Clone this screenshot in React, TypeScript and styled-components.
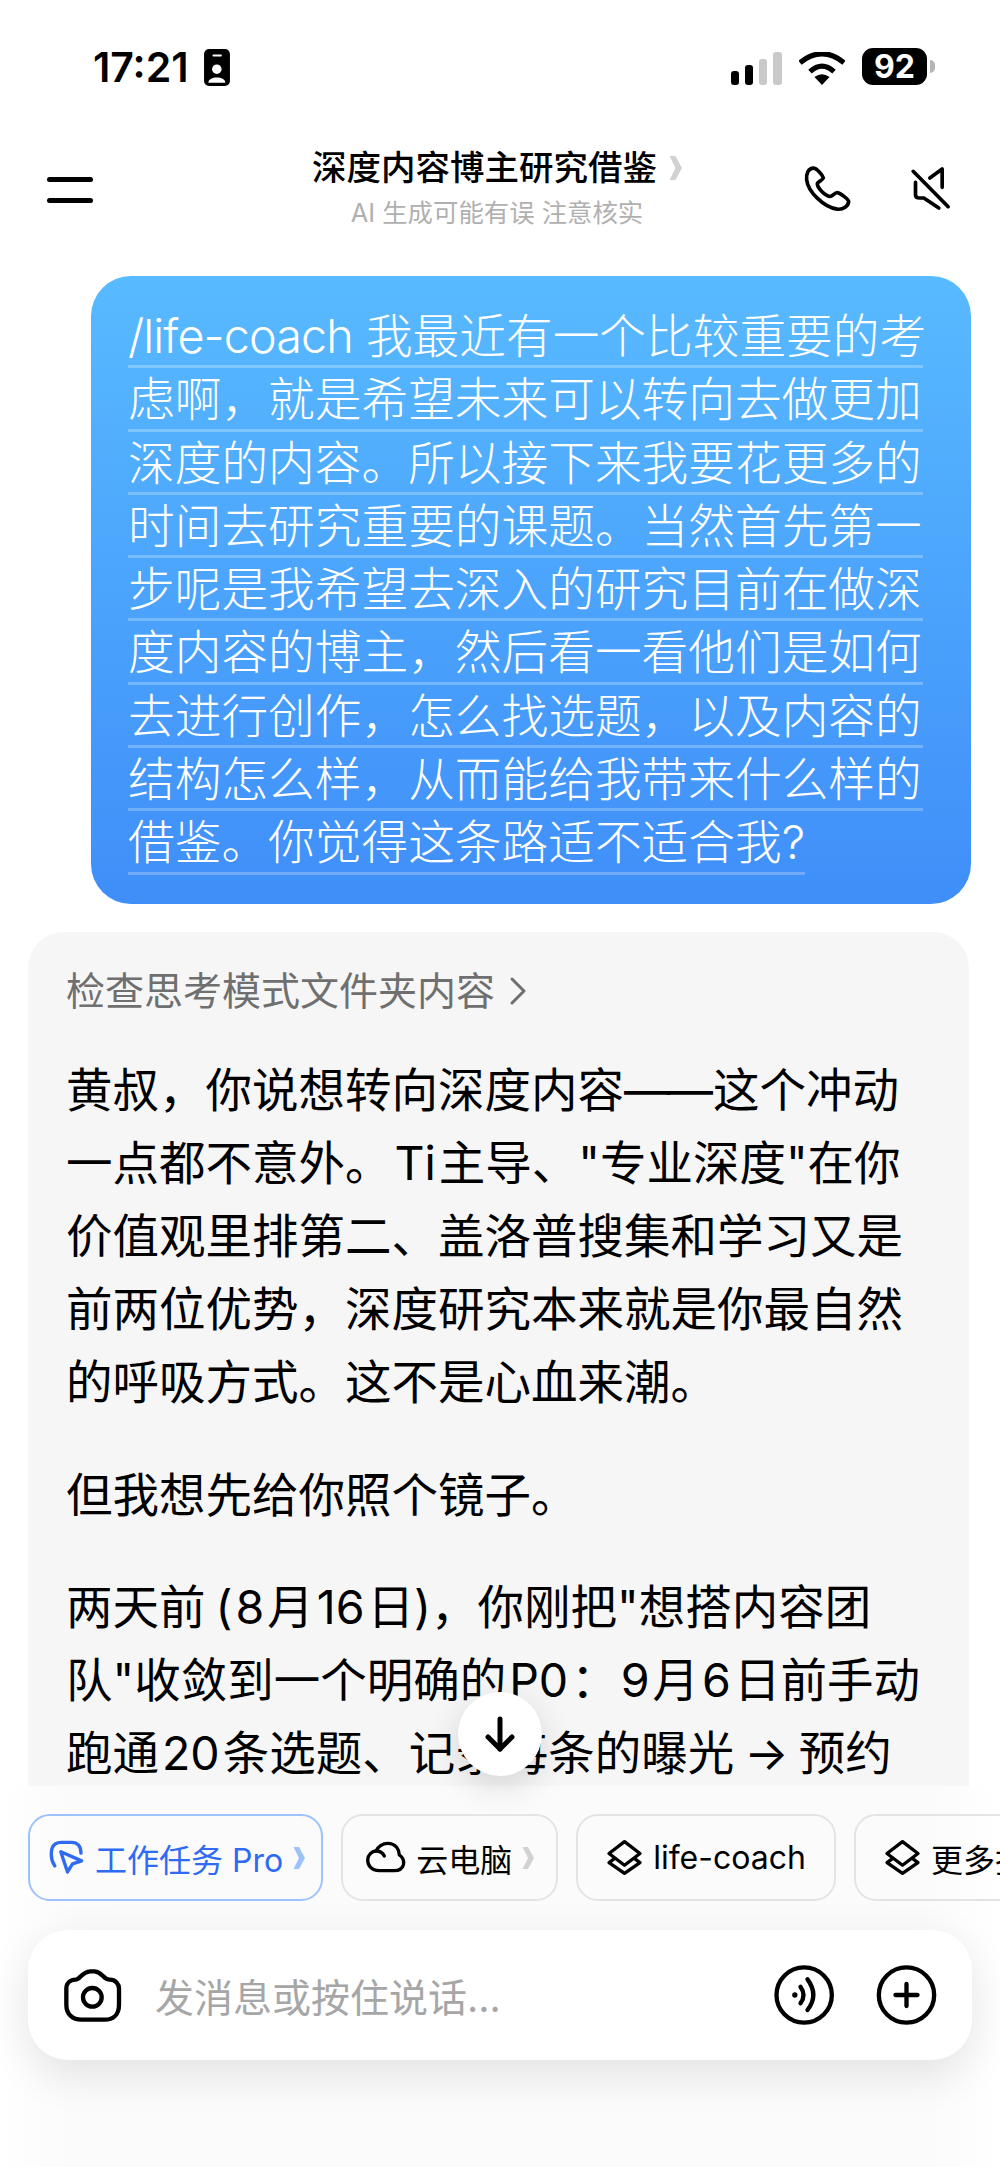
import styled, { createGlobalStyle } from 'styled-components';

const FONT = `Inter, "Noto Sans CJK SC", sans-serif`;

const GlobalStyle = createGlobalStyle`
  html, body {
    margin: 0;
    padding: 0;
    background: #fff;
  }
  * {
    box-sizing: border-box;
  }
`;

const Page = styled.div`
  width: 1000px;
  height: 2167px;
  display: flex;
  flex-direction: column;
  overflow: hidden;
  background: #fff;
  font-family: ${FONT};
  color: #000;
`;

const StatusBar = styled.div`
  flex: none;
  height: 120px;
  padding: 49px 73px 0 93px;
  display: flex;
  justify-content: space-between;
  align-items: flex-start;
`;
const StatusLeft = styled.div`
  display: flex;
  align-items: center;
  gap: 15px;
  height: 37px;
`;
const Time = styled.span`
  font-size: 41px;
  line-height: 37px;
  font-weight: 600;
`;
const StatusRight = styled.div`
  display: flex;
  align-items: flex-end;
  gap: 17px;
  height: 36px;
`;
const Battery = styled.div`
  width: 65px;
  height: 37px;
  border-radius: 11px;
  background: #000;
  color: #fff;
  font-size: 32px;
  font-weight: 700;
  display: flex;
  align-items: center;
  justify-content: center;
  position: relative;
  &::after {
    content: '';
    position: absolute;
    right: -8px;
    top: 12px;
    width: 5px;
    height: 13px;
    border-radius: 0 5px 5px 0;
    background: #b5b5b5;
  }
`;

const NavBar = styled.div`
  flex: none;
  height: 142px;
  padding: 0 47px;
  display: grid;
  grid-template-columns: 1fr auto 1fr;
  align-items: center;
`;
const MenuButton = styled.div`
  display: flex;
  flex-direction: column;
  gap: 16px;
  margin-top: -3px;
`;
const MenuBar = styled.div`
  width: 46px;
  height: 5px;
  border-radius: 3px;
  background: #000;
`;
const NavCenter = styled.div`
  display: flex;
  flex-direction: column;
  align-items: center;
  margin-left: -6px;
`;
const NavTitle = styled.div`
  display: flex;
  align-items: center;
  gap: 12px;
  font-size: 34.5px;
  line-height: 44px;
  font-weight: 500;
`;
const NavSub = styled.div`
  font-size: 25.4px;
  line-height: 46px;
  color: #b0b0b0;
`;
const NavActions = styled.div`
  display: flex;
  justify-content: flex-end;
  align-items: center;
  gap: 52px;
  margin-top: -4px;
  margin-right: -1px;
`;

const Chat = styled.div`
  flex: 1;
  min-height: 0;
  overflow: hidden;
  padding-top: 14px;
`;
const Bubble = styled.div`
  margin: 0 29px 28px 91px;
  padding: 29px 48px 29px 37px;
  border-radius: 40px;
  background: linear-gradient(180deg, #58baff 0%, #3f8ef9 100%);
  color: #fff;
`;
const BubbleLine = styled.div<{ $fit?: boolean }>`
  height: 63.3px;
  line-height: 62px;
  font-size: 46.7px;
  font-weight: 300;
  white-space: nowrap;
  border-bottom: 3px solid rgba(255, 255, 255, 0.25);
  width: ${(props) => (props.$fit ? 'fit-content' : 'auto')};
`;
const Command = styled.span`
  letter-spacing: -0.9px;
`;

const Card = styled.div`
  margin: 0 31px 0 28px;
  padding: 30px 38px 0;
  border-radius: 36px 36px 0 0;
  background: #f6f6f6;
  height: 1000px;
`;
const CardHead = styled.div`
  display: flex;
  align-items: center;
  gap: 14px;
  font-size: 39px;
  line-height: 58px;
  color: #6f6f6f;
  margin-bottom: 34px;
`;
const Para = styled.div`
  margin-bottom: 39px;
`;
const ParaLine = styled.div`
  font-size: 46.5px;
  line-height: 73.2px;
  word-spacing: -3px;
  white-space: nowrap;
`;
const Latin = styled.span`
  margin: 0 3px;
`;
const Dash = styled.span`
  letter-spacing: -4px;
  margin-right: 4px;
`;

const Composer = styled.div`
  flex: none;
  height: 381px;
  padding-top: 28px;
  position: relative;
  z-index: 1;
  background: linear-gradient(90deg, #fff 0%, #fbfbfb 7%, #fbfbfb 93%, #fff 100%);
`;
const ScrollDown = styled.div`
  position: absolute;
  left: 458px;
  bottom: calc(100% + 10px);
  width: 84px;
  height: 84px;
  border-radius: 50%;
  background: #fff;
  display: flex;
  align-items: center;
  justify-content: center;
  box-shadow: 0 10px 34px rgba(0, 0, 0, 0.14);
`;
const ChipRow = styled.div`
  display: flex;
  gap: 18px;
  padding-left: 28px;
  overflow: hidden;
  margin-bottom: 29px;
`;
const Chip = styled.div<{ $active?: boolean; $pad?: string }>`
  flex: none;
  height: 87px;
  padding: ${(props) => props.$pad ?? '0 28px'};
  display: flex;
  align-items: center;
  gap: 10px;
  border-radius: 22px;
  border: 2.5px solid ${(props) => (props.$active ? '#9dc2fb' : '#e4e4e4')};
  color: ${(props) => (props.$active ? '#2f6bf2' : '#000')};
  font-size: 32px;
  white-space: nowrap;
`;
const InputBar = styled.div`
  margin: 0 28px;
  height: 130px;
  padding: 0 34px 0 35px;
  border-radius: 40px;
  background: #fff;
  display: flex;
  align-items: center;
  box-shadow: 0 14px 44px rgba(0, 0, 0, 0.1);
`;
const Placeholder = styled.div`
  flex: 1;
  margin-left: 32px;
  font-size: 39px;
  color: #a6a6a6;
`;
const InputActions = styled.div`
  display: flex;
  align-items: center;
  gap: 41px;
`;

const Chevron = ({ color, h = 24 }: { color: string; h?: number }) => (
  <svg width={h * 0.5} height={h} viewBox="0 0 12 24">
    <path d="M0.5 1 L6 1 L12 12 L6 23 L0.5 23 L6 12 Z" fill={color} />
  </svg>
);

const Layers = () => (
  <svg width="37" height="37" viewBox="315 180 110 110" fill="none" stroke="currentColor" strokeWidth="10" strokeLinejoin="round" strokeLinecap="round">
    <path d="M370 188 L416 223 L370 258 L324 223 Z" />
    <path d="M338 240 L324 250 L370 282 L416 250 L402 240" />
  </svg>
);

// latin runs sit a little apart from the hanzi around them
const renderLine = (line: string) =>
  line.split(/([A-Za-z0-9]+|——)/).map((part, i) => {
    if (part === '——') return <Dash key={i}>{part}</Dash>;
    return i % 2 === 1 ? <Latin key={i}>{part}</Latin> : part;
  });

const bubbleLines = [
  <>
    <Command>/life-coach</Command> 我最近有一个比较重要的考
  </>,
  '虑啊，就是希望未来可以转向去做更加',
  '深度的内容。所以接下来我要花更多的',
  '时间去研究重要的课题。当然首先第一',
  '步呢是我希望去深入的研究目前在做深',
  '度内容的博主，然后看一看他们是如何',
  '去进行创作，怎么找选题，以及内容的',
  '结构怎么样，从而能给我带来什么样的',
  '借鉴。你觉得这条路适不适合我?',
];

const paragraphs = [
  [
    '黄叔，你说想转向深度内容——这个冲动',
    '一点都不意外。Ti主导、"专业深度"在你',
    '价值观里排第二、盖洛普搜集和学习又是',
    '前两位优势，深度研究本来就是你最自然',
    '的呼吸方式。这不是心血来潮。',
  ],
  ['但我想先给你照个镜子。'],
  [
    '两天前 (8月16日)，你刚把"想搭内容团',
    '队"收敛到一个明确的P0：9月6日前手动',
    '跑通20条选题、记录每条的曝光 → 预约',
  ],
];

export default function App() {
  return (
    <Page>
      <GlobalStyle />
      <StatusBar>
        <StatusLeft>
          <Time>17:21</Time>
          <svg width="26" height="37" viewBox="365 28 77 110">
            <rect x="365" y="28" width="77" height="110" rx="15" fill="#000" />
            <rect x="390" y="44" width="28" height="6" rx="3" fill="#fff" />
            <circle cx="403" cy="88" r="14" fill="#fff" />
            <path d="M378 128 C378 108 428 108 428 128 Z" fill="#fff" />
          </svg>
        </StatusLeft>
        <StatusRight>
          <svg width="51" height="33" viewBox="0 0 51 33">
            <rect x="0" y="19" width="8" height="14" rx="3" fill="#000" />
            <rect x="14" y="13" width="8" height="20" rx="3" fill="#000" />
            <rect x="28" y="7" width="8" height="26" rx="3" fill="#c9c9c9" />
            <rect x="42" y="0" width="9" height="33" rx="3" fill="#c9c9c9" />
          </svg>
          <svg width="46" height="33" viewBox="238 35 134 96" fill="none" stroke="#000" strokeWidth="15">
            <path d="M241 66 Q305 14 369 66" />
            <path d="M270 92 Q305 60 340 92" />
            <path d="M283 108 Q305 92 327 108 L305 131 Z" fill="#000" stroke="none" />
          </svg>
          <Battery>92</Battery>
        </StatusRight>
      </StatusBar>

      <NavBar>
        <MenuButton>
          <MenuBar />
          <MenuBar />
        </MenuButton>
        <NavCenter>
          <NavTitle>
            深度内容博主研究借鉴
            <Chevron color="#d2d2d2" h={26} />
          </NavTitle>
          <NavSub>AI 生成可能有误 注意核实</NavSub>
        </NavCenter>
        <NavActions>
          <svg width="55" height="52" viewBox="60 40 165 155" fill="none" stroke="#000" strokeWidth="11" strokeLinejoin="round">
            <path d="M100 55 C85 55 78 72 80 90 C84 125 130 172 172 178 C190 180 205 168 206 155 C206 148 180 130 172 128 C163 128 158 140 150 140 C135 138 112 115 112 102 C112 96 128 92 130 84 C128 76 110 55 100 55 Z" />
          </svg>
          <svg width="47" height="50" viewBox="380 40 140 150" fill="none" stroke="#000" strokeWidth="11" strokeLinecap="round" strokeLinejoin="round">
            <path d="M398 62 L503 168" />
            <path d="M448 82 L485 55 L485 110" />
            <path d="M405 95 L405 132 Q405 142 418 142 L430 142 L475 172" />
          </svg>
        </NavActions>
      </NavBar>

      <Chat>
        <Bubble>
          {bubbleLines.map((line, i) => (
            <BubbleLine key={i} $fit={i === bubbleLines.length - 1}>
              {line}
            </BubbleLine>
          ))}
        </Bubble>
        <Card>
          <CardHead>
            检查思考模式文件夹内容
            <svg width="18" height="30" viewBox="0 0 18 30" fill="none" stroke="#6f6f6f" strokeWidth="3" strokeLinecap="round" strokeLinejoin="round">
              <path d="M3 3 L15 15 L3 27" />
            </svg>
          </CardHead>
          {paragraphs.map((lines) => (
            <Para key={lines[0]}>
              {lines.map((line) => (
                <ParaLine key={line}>{renderLine(line)}</ParaLine>
              ))}
            </Para>
          ))}
        </Card>
      </Chat>

      <Composer>
        <ScrollDown>
          <svg width="30" height="36" viewBox="0 0 30 36" fill="none" stroke="#000" strokeWidth="5" strokeLinecap="round" strokeLinejoin="round">
            <path d="M15 3 L15 33" />
            <path d="M3 21 L15 33 L27 21" />
          </svg>
        </ScrollDown>
        <ChipRow>
          <Chip $active $pad="0 16px 0 18px">
            <svg width="37" height="37" viewBox="140 180 110 110" fill="none" stroke="currentColor" strokeWidth="10" strokeLinecap="round" strokeLinejoin="round">
              <path d="M160 260 C150 245 148 225 152 208 C156 195 165 190 180 190 L210 190 C228 190 238 202 238 222" />
              <path d="M178 218 L240 245 L213 254 L198 278 Z" />
            </svg>
            工作任务 Pro
            <Chevron color="#9dc2fb" h={24} />
          </Chip>
          <Chip $pad="0 22px 0 23px">
            <svg width="40" height="35" viewBox="1100 180 120 105" fill="none" stroke="currentColor" strokeWidth="10" strokeLinecap="round" strokeLinejoin="round">
              <path d="M1140 272 C1115 272 1105 255 1105 240 C1105 225 1118 213 1130 213 C1135 200 1150 190 1165 190 C1190 190 1200 210 1200 225 C1210 232 1215 243 1212 255 C1208 268 1195 272 1185 272 Z" />
              <path d="M1130 213 C1140 213 1150 218 1155 228" />
            </svg>
            云电脑
            <Chevron color="#d2d2d2" h={24} />
          </Chip>
          <Chip>
            <Layers />
            life-coach
          </Chip>
          <Chip>
            <Layers />
            更多技能
          </Chip>
        </ChipRow>
        <InputBar>
          <svg width="60" height="55" viewBox="40 50 180 165" fill="none" stroke="#000" strokeWidth="13" strokeLinejoin="round">
            <path d="M50 112 C50 95 62 85 78 85 C92 85 95 62 122 60 L135 60 C160 62 160 85 180 85 C198 85 208 98 208 112 L208 160 C208 190 190 205 165 205 L95 205 C70 205 50 190 50 160 Z" />
            <circle cx="128" cy="138" r="28" />
          </svg>
          <Placeholder>发消息或按住说话...</Placeholder>
          <InputActions>
            <svg width="62" height="60" viewBox="40 30 185 180" fill="none" stroke="#000" strokeWidth="13" strokeLinecap="round">
              <circle cx="133" cy="120" r="83" />
              <circle cx="105" cy="120" r="8" fill="#000" stroke="none" />
              <path d="M122 95 Q140 120 122 145" />
              <path d="M143 73 Q178 120 143 165" />
            </svg>
            <svg width="62" height="60" viewBox="350 30 185 180" fill="none" stroke="#000" strokeWidth="13" strokeLinecap="round">
              <circle cx="441" cy="120" r="83" />
              <path d="M408 120 L474 120" />
              <path d="M441 87 L441 153" />
            </svg>
          </InputActions>
        </InputBar>
      </Composer>
    </Page>
  );
}
